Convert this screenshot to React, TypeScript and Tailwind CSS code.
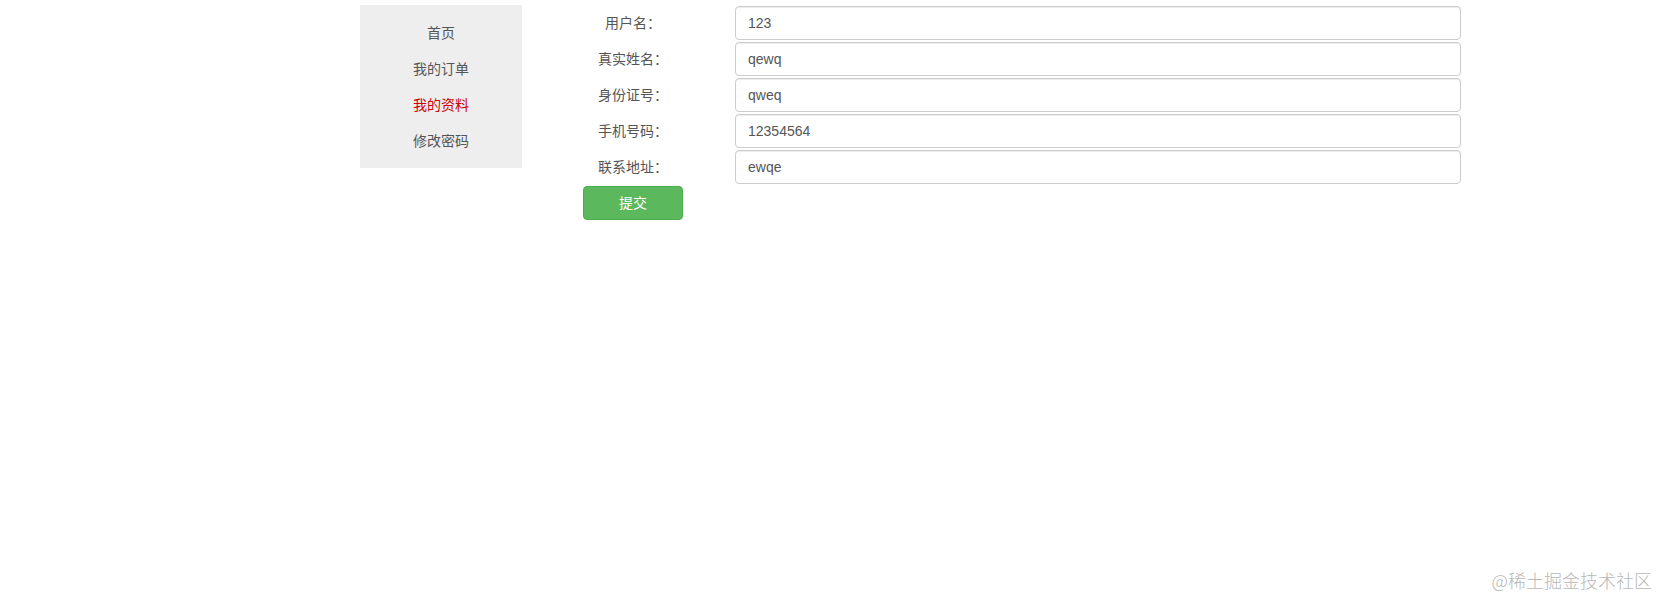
import React from 'react';

const menu = [
  { label: '首页' },
  { label: '我的订单' },
  { label: '我的资料', active: true },
  { label: '修改密码' },
];

const fields = [
  { label: '用户名：', value: '123' },
  { label: '真实姓名：', value: 'qewq' },
  { label: '身份证号：', value: 'qweq' },
  { label: '手机号码：', value: '12354564' },
  { label: '联系地址：', value: 'ewqe' },
];

export default function App() {
  return (
    <div className="relative w-full h-[599px] bg-white font-['Liberation_Sans','Noto_Sans_CJK_SC',sans-serif] text-[14px] text-[#555]">
      <div className="flex items-start pl-[360px]">
        <ul className="mt-[5px] w-[162px] bg-[#eeeeee] pt-[10px] pb-[9px]">
          {menu.map((m) => (
            <li
              key={m.label}
              className={
                'h-[36px] leading-[36px] text-center ' +
                (m.active ? 'text-[#cc0000]' : 'text-[#555]')
              }
            >
              {m.label}
            </li>
          ))}
        </ul>

        <form className="ml-[61px] pt-[6px] flex flex-col">
          {fields.map((f) => (
            <div key={f.label} className="flex items-center h-[34px] mb-[2px]">
              <label className="w-[100px] text-center text-[#555]">{f.label}</label>
              <input
                readOnly
                value={f.value}
                className="ml-[52px] w-[726px] h-[34px] px-[12px] border border-[#cccccc] rounded-[4px] text-[14px] text-[#555] outline-none bg-white shadow-[inset_0_1px_1px_rgba(0,0,0,0.075)]"
              />
            </div>
          ))}
          <button
            type="button"
            className="w-[100px] h-[34px] rounded-[4px] bg-[#5cb85c] text-white text-[14px] border border-[#4cae4c]"
          >
            提交
          </button>
        </form>
      </div>

      <div className="absolute right-[5px] bottom-[5px] text-[18px] text-[#b8b8b8] font-['Noto_Sans_CJK_SC',sans-serif] font-light">
        @稀土掘金技术社区
      </div>
    </div>
  );
}
